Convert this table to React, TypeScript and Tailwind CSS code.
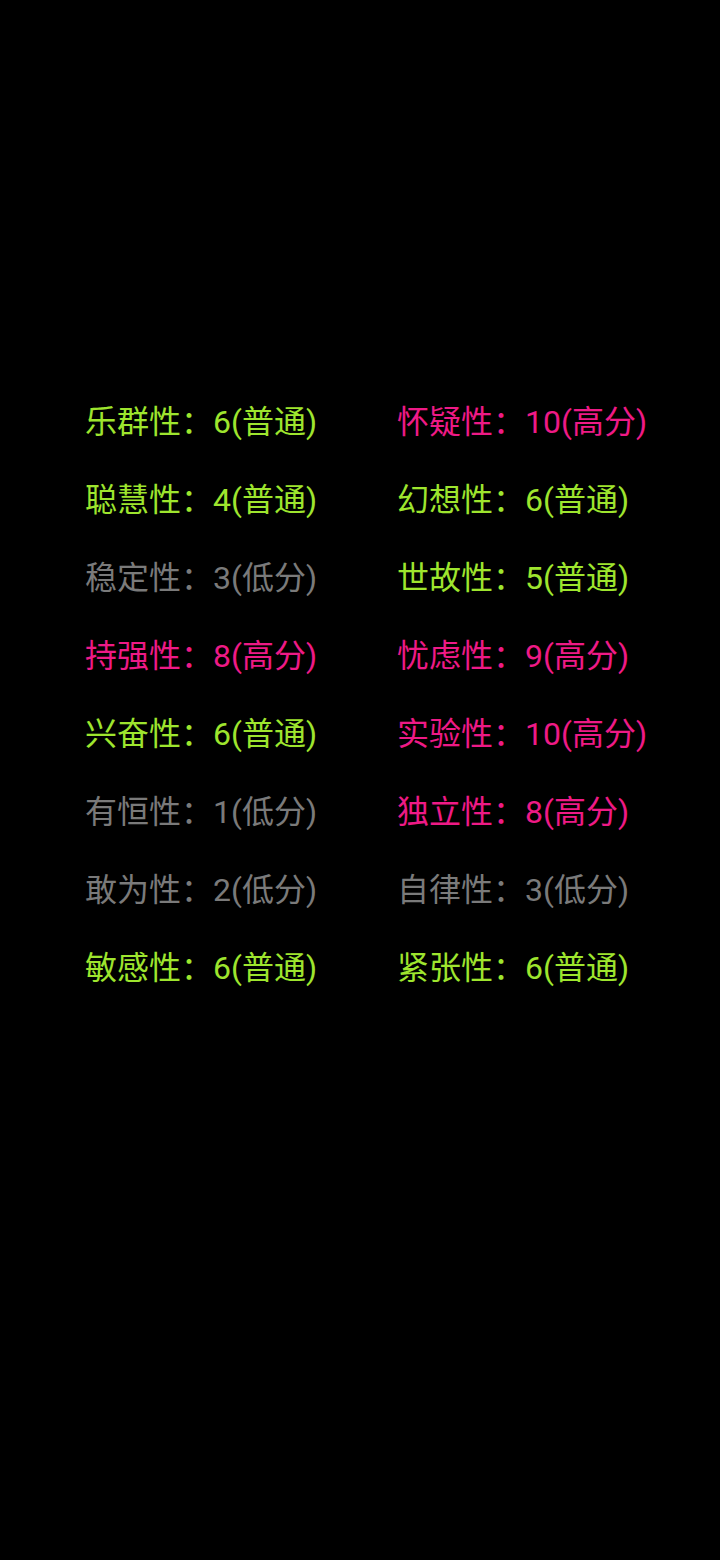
import React from "react";

type Level = "low" | "mid" | "high";

interface Trait {
  name: string;
  score: number;
  level: Level;
}

const levelText: Record<Level, string> = {
  low: "低分",
  mid: "普通",
  high: "高分",
};

const levelColor: Record<Level, string> = {
  low: "text-[#7a7a7a]",
  mid: "text-[#9ee52e]",
  high: "text-[#ee1a86]",
};

const traits: Trait[] = [
  { name: "乐群性", score: 6, level: "mid" },
  { name: "怀疑性", score: 10, level: "high" },
  { name: "聪慧性", score: 4, level: "mid" },
  { name: "幻想性", score: 6, level: "mid" },
  { name: "稳定性", score: 3, level: "low" },
  { name: "世故性", score: 5, level: "mid" },
  { name: "持强性", score: 8, level: "high" },
  { name: "忧虑性", score: 9, level: "high" },
  { name: "兴奋性", score: 6, level: "mid" },
  { name: "实验性", score: 10, level: "high" },
  { name: "有恒性", score: 1, level: "low" },
  { name: "独立性", score: 8, level: "high" },
  { name: "敢为性", score: 2, level: "low" },
  { name: "自律性", score: 3, level: "low" },
  { name: "敏感性", score: 6, level: "mid" },
  { name: "紧张性", score: 6, level: "mid" },
];

export default function App() {
  return (
    <div className="w-[720px] h-[1560px] bg-black pt-[383px] pl-[85px] font-['Roboto','Noto_Sans_CJK_SC',sans-serif]">
      <div className="grid grid-cols-[312px_312px]">
        {traits.map((t) => (
          <div
            key={t.name}
            className={`h-[78px] flex items-center text-[32px] leading-none whitespace-nowrap ${levelColor[t.level]}`}
          >
            {t.name}：{t.score}({levelText[t.level]})
          </div>
        ))}
      </div>
    </div>
  );
}
